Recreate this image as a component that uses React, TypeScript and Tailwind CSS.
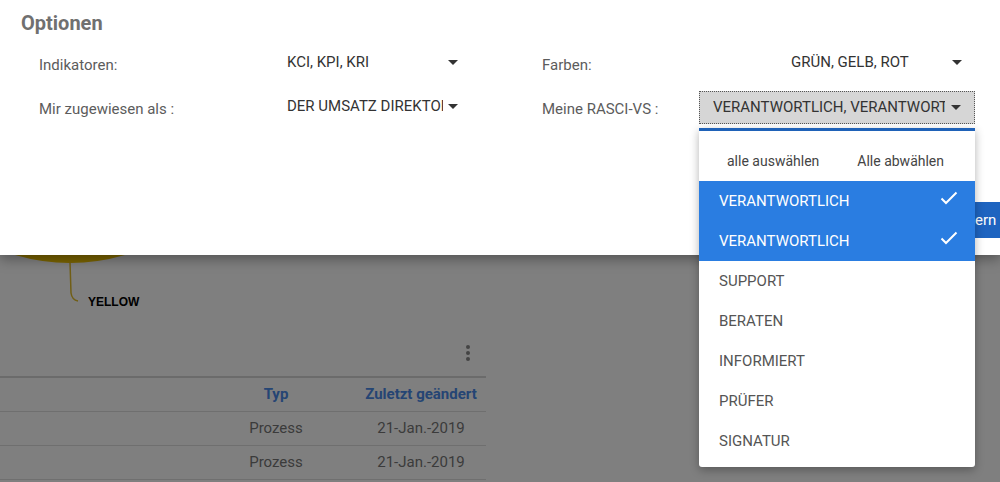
import React from 'react';

const Caret = ({ color = '#333' }: { color?: string }) => (
  <svg width="10" height="5" viewBox="0 0 10 5" className="shrink-0">
    <path d="M0 0h10L5 5z" fill={color} />
  </svg>
);

const Check = () => (
  <svg width="18" height="14" viewBox="0 0 18 14" className="shrink-0">
    <path d="M1.5 7.5l4.5 4.5L16.5 1.5" fill="none" stroke="#fff" strokeWidth="2" />
  </svg>
);

const roles = [
  { label: 'VERANTWORTLICH', selected: true },
  { label: 'VERANTWORTLICH', selected: true },
  { label: 'SUPPORT', selected: false },
  { label: 'BERATEN', selected: false },
  { label: 'INFORMIERT', selected: false },
  { label: 'PRÜFER', selected: false },
  { label: 'SIGNATUR', selected: false },
];

const rows = [
  { typ: 'Prozess', date: '21-Jan.-2019' },
  { typ: 'Prozess', date: '21-Jan.-2019' },
];

export default function App() {
  return (
    <div className="relative w-[1000px] h-[482px] overflow-hidden bg-white font-['Roboto',sans-serif]">
      {/* page behind the dialog */}
      <div className="w-[486px]">
        <svg width="486" height="330" className="block">
          <path d="M15 200 L125 200 L125 255 Q70 271 15 255 Z" fill="#f4c700" />
          <path d="M70 262 L71 293 Q72 300 78 301" fill="none" stroke="#e2bd2a" strokeWidth="1.5" />
          <text x="88" y="306" fontFamily="'Liberation Sans', Arial, sans-serif" fontWeight="700" fontSize="12" fill="#000">
            YELLOW
          </text>
        </svg>
        <div className="h-[46px] flex items-center justify-end pr-[16px]">
          <div className="flex flex-col gap-[2px]">
            <span className="block w-[4px] h-[4px] rounded-full bg-[#888]" />
            <span className="block w-[4px] h-[4px] rounded-full bg-[#888]" />
            <span className="block w-[4px] h-[4px] rounded-full bg-[#888]" />
          </div>
        </div>
        <div className="border-t-2 border-[#d6d6d6]">
          <div className="flex h-[34px] items-center border-b border-[#dedede] text-[15px] font-bold text-[#4a8ae8]">
            <div className="w-[226px]" />
            <div className="w-[100px] text-center">Typ</div>
            <div className="w-[30px]" />
            <div className="w-[130px] text-center">Zuletzt geändert</div>
          </div>
          {rows.map((r, i) => (
            <div key={i} className="flex h-[34px] items-center border-b border-[#dedede] text-[15px] text-[#777]">
              <div className="w-[226px]" />
              <div className="w-[100px] text-center">{r.typ}</div>
              <div className="w-[30px]" />
              <div className="w-[130px] text-center">{r.date}</div>
            </div>
          ))}
        </div>
      </div>

      {/* backdrop */}
      <div className="absolute inset-0 bg-black/50" />

      {/* options dialog */}
      <div className="absolute top-0 left-0 w-[1000px] h-[255px] bg-white shadow-[0_4px_12px_rgba(0,0,0,0.35)]">
        <h2 className="pl-[21px] pt-[11px] text-[20px] leading-[24px] font-bold text-[#707070]">Optionen</h2>
        <div className="mt-[12px] pl-[39px] flex flex-col gap-[11px] text-[15px]">
          <div className="flex h-[33px] items-center">
            <div className="w-[248px] pt-[4px] text-[#5c5c5c]">Indikatoren:</div>
            <div className="w-[171px] flex items-center pb-[2px] text-[#333]">
              <span className="flex-1 overflow-hidden whitespace-nowrap">KCI, KPI, KRI</span>
              <Caret />
            </div>
            <div className="w-[84px]" />
            <div className="w-[157px] pt-[4px] text-[#5c5c5c]">Farben:</div>
            <div className="w-[276px] flex items-center pb-[2px] pl-[92px] pr-[13px] text-[#333]">
              <span className="flex-1 overflow-hidden whitespace-nowrap">GRÜN, GELB, ROT</span>
              <Caret />
            </div>
          </div>
          <div className="flex h-[33px] items-center">
            <div className="w-[248px] pt-[4px] text-[#5c5c5c]">Mir zugewiesen als :</div>
            <div className="w-[171px] flex items-center pb-[2px] text-[#333]">
              <span className="flex-1 overflow-hidden whitespace-nowrap mr-[5px]">DER UMSATZ DIREKTORIN</span>
              <Caret />
            </div>
            <div className="w-[84px]" />
            <div className="w-[157px] pt-[4px] text-[#5c5c5c]">Meine RASCI-VS :</div>
            <div className="w-[276px] h-[33px] flex items-center pl-[13px] pr-[13px] bg-[#d6d6d6] border border-dotted border-[#555] text-[#333]">
              <span className="flex-1 overflow-hidden whitespace-nowrap mr-[6px]">VERANTWORTLICH, VERANTWORTLICH</span>
              <Caret />
            </div>
          </div>
        </div>

        <button className="absolute left-[914px] top-[202px] h-[36px] px-[16px] bg-[#1e64c0] text-white text-[15px] rounded-[2px]">
          Speichern
        </button>
      </div>

      {/* open select menu */}
      <div className="absolute left-[699px] top-[128px] w-[276px] h-[339px] bg-white border-t-[3px] border-[#1f62b8] rounded-b-[3px] shadow-[0_3px_10px_rgba(0,0,0,0.3)]">
        <div className="h-[50px] pt-[20px] pl-[28px] flex gap-[38px] text-[14px] leading-[20px] text-[#444]">
          <span>alle auswählen</span>
          <span>Alle abwählen</span>
        </div>
        {roles.map((r, i) => (
          <div
            key={i}
            className={
              r.selected
                ? 'h-[40px] flex items-center pl-[20px] pr-[17px] bg-[#2a7de1] text-white text-[15px]'
                : 'h-[40px] flex items-center pl-[20px] pr-[17px] text-[#555] text-[15px]'
            }
          >
            <span className="flex-1">{r.label}</span>
            {r.selected && (
              <span className="-mt-[6px]">
                <Check />
              </span>
            )}
          </div>
        ))}
      </div>
    </div>
  );
}
